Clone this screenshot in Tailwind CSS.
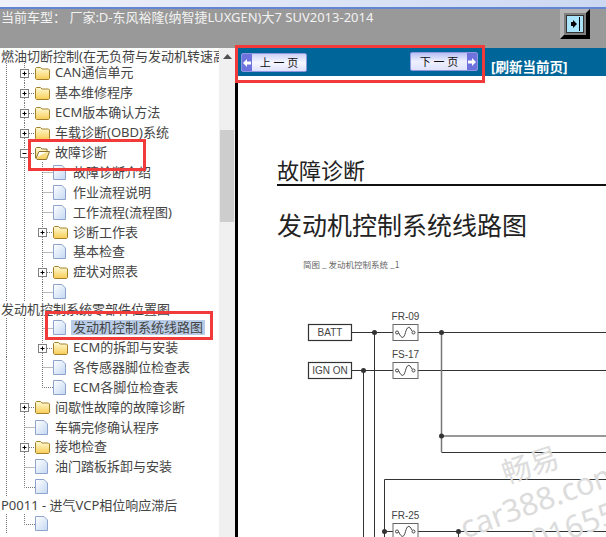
<!DOCTYPE html>
<html lang="zh">
<head>
    <meta charset="UTF-8">
    <script src="https://cdn.jsdelivr.net/npm/@tailwindcss/browser@4"></script>
    <title>故障诊断</title>
</head>
<body class="relative w-[606px] h-[537px] overflow-hidden bg-white font-['Noto_Sans','Noto_Sans_CJK_SC',sans-serif]">
    <!-- shared tree icons -->
    <svg class="absolute w-0 h-0">
        <defs>
            <linearGradient id="fy" x1="0" y1="0" x2="0" y2="1"><stop offset="0" stop-color="#fffbd8"/><stop offset="1" stop-color="#f7cd55"/></linearGradient>
            <linearGradient id="dc" x1="0" y1="0" x2="1" y2="1"><stop offset="0" stop-color="#ffffff"/><stop offset="1" stop-color="#c4d8f2"/></linearGradient>
            <symbol id="folder" viewBox="0 0 15 14"><path d="M.5 4V2.500L1.500 1.500H5.500L7 3H13.500L14.500 4V12.500L13.500 13.500H1.500L.5 12.500Z" fill="url(#fy)" stroke="#a5802c"/></symbol>
            <symbol id="open" viewBox="0 0 15 14"><path d="M.5 12V2.500L1.500 1.500H5.500L7 3H12V5.500H4L1 12.500L2 13.500H11.500L14.500 5.500H12" fill="url(#fy)" stroke="#8f7430"/></symbol>
            <symbol id="doc" viewBox="0 0 13 15"><path d="M.5.5H9L12.500 4V14.500H.5Z" fill="url(#dc)" stroke="#8ea4cc"/></symbol>
            <g id="box"><rect x="-3.500" y="-3.500" width="8" height="8" fill="#fff" stroke="#808080"/><path d="M-1.500.5H2.500" stroke="#000"/></g>
            <g id="plus"><use href="#box"/><path d="M.5-1.500V2.500" stroke="#000"/></g>
            <symbol id="p1" viewBox="0 0 35 20"><path d="M6.500 0V20M29 10.500H35M24.500 0V6M24.500 15V20" fill="none" stroke="#777" stroke-dasharray="1 1"/><use href="#plus" x="24" y="10"/></symbol>
            <symbol id="m1" viewBox="0 0 35 20"><path d="M6.500 0V20M29 10.500H35M24.500 0V6M24.500 15V20" fill="none" stroke="#777" stroke-dasharray="1 1"/><use href="#box" x="24" y="10"/></symbol>
            <symbol id="d1" viewBox="0 0 35 20"><path d="M6.500 0V20M24.500 0V20M24.500 10.500H35" fill="none" stroke="#777" stroke-dasharray="1 1"/></symbol>
            <symbol id="e1" viewBox="0 0 35 20"><path d="M6.500 0V20M24.500 0V10.500H35" fill="none" stroke="#777" stroke-dasharray="1 1"/></symbol>
            <symbol id="p2" viewBox="0 0 53 20"><path d="M6.500 0V20M24.500 0V20M47 10.500H53M42.500 0V6M42.500 15V20" fill="none" stroke="#777" stroke-dasharray="1 1"/><use href="#plus" x="42" y="10"/></symbol>
            <symbol id="d2" viewBox="0 0 53 20"><path d="M6.500 0V20M24.500 0V20M42.500 0V20M42.500 10.500H53" fill="none" stroke="#777" stroke-dasharray="1 1"/></symbol>
            <symbol id="e2" viewBox="0 0 53 20"><path d="M6.500 0V20M24.500 0V20M42.500 0V10.500H53" fill="none" stroke="#777" stroke-dasharray="1 1"/></symbol>
        </defs>
    </svg>

    <!-- window strip -->
    <div class="h-[9px] bg-gradient-to-r from-[#f0f2fa] to-[#ccd8f2] border-b-2 border-[#6485d2]"></div>

    <!-- car model bar -->
    <div class="h-[39px] bg-[#999999] flex justify-between pl-[1px] pr-[16px]">
        <p class="text-[13px] leading-[16px] text-[#f2f2f2] whitespace-pre">当前车型： 厂家:D-东风裕隆(纳智捷LUXGEN)大7 SUV2013-2014</p>
        <div class="w-[30px] h-[30px] border-[4px] border-t-[#b5b5b5] border-l-[#b5b5b5] border-r-black border-b-black bg-[#808080] p-[2px]">
            <div class="w-full h-full bg-[#a9e4fb] border border-[#333] flex items-center justify-end pr-[2px]">
                <svg width="11" height="14" viewBox="0 0 11 14"><path d="M1 5H3V3L7 7L3 11V9H1Z" fill="#000"/><path d="M9.500 0V14" stroke="#000"/></svg>
            </div>
        </div>
    </div>

    <div class="flex h-[489px]">
        <!-- tree -->
        <div class="w-[219px] h-full overflow-hidden text-[13px] text-[#444] leading-none whitespace-nowrap">
            <div class="h-[15px] pl-[1px] flex items-center pt-[2px]">燃油切断控制(在无负荷与发动机转速高</div>
            <div class="flex items-center h-[19.9px]"><svg class="w-[35px] h-[20px] shrink-0"><use href="#p1"/></svg><svg class="w-[15px] h-[14px] shrink-0"><use href="#folder"/></svg><span class="ml-[5px]">CAN通信单元</span></div>
            <div class="flex items-center h-[19.9px]"><svg class="w-[35px] h-[20px] shrink-0"><use href="#p1"/></svg><svg class="w-[15px] h-[14px] shrink-0"><use href="#folder"/></svg><span class="ml-[5px]">基本维修程序</span></div>
            <div class="flex items-center h-[19.9px]"><svg class="w-[35px] h-[20px] shrink-0"><use href="#p1"/></svg><svg class="w-[15px] h-[14px] shrink-0"><use href="#folder"/></svg><span class="ml-[5px]">ECM版本确认方法</span></div>
            <div class="flex items-center h-[19.9px]"><svg class="w-[35px] h-[20px] shrink-0"><use href="#p1"/></svg><svg class="w-[15px] h-[14px] shrink-0"><use href="#folder"/></svg><span class="ml-[5px]">车载诊断(OBD)系统</span></div>
            <div class="flex items-center h-[19.9px]"><svg class="w-[35px] h-[20px] shrink-0"><use href="#m1"/></svg><svg class="w-[15px] h-[14px] shrink-0"><use href="#open"/></svg><span class="ml-[5px]">故障诊断</span></div>
            <div class="flex items-center h-[19.9px]"><svg class="w-[53px] h-[20px] shrink-0"><use href="#d2"/></svg><svg class="w-[13px] h-[15px] shrink-0"><use href="#doc"/></svg><span class="ml-[7px]">故障诊断介绍</span></div>
            <div class="flex items-center h-[19.9px]"><svg class="w-[53px] h-[20px] shrink-0"><use href="#d2"/></svg><svg class="w-[13px] h-[15px] shrink-0"><use href="#doc"/></svg><span class="ml-[7px]">作业流程说明</span></div>
            <div class="flex items-center h-[19.9px]"><svg class="w-[53px] h-[20px] shrink-0"><use href="#d2"/></svg><svg class="w-[13px] h-[15px] shrink-0"><use href="#doc"/></svg><span class="ml-[7px]">工作流程(流程图)</span></div>
            <div class="flex items-center h-[19.9px]"><svg class="w-[53px] h-[20px] shrink-0"><use href="#p2"/></svg><svg class="w-[15px] h-[14px] shrink-0"><use href="#folder"/></svg><span class="ml-[5px]">诊断工作表</span></div>
            <div class="flex items-center h-[19.9px]"><svg class="w-[53px] h-[20px] shrink-0"><use href="#d2"/></svg><svg class="w-[13px] h-[15px] shrink-0"><use href="#doc"/></svg><span class="ml-[7px]">基本检查</span></div>
            <div class="flex items-center h-[19.9px]"><svg class="w-[53px] h-[20px] shrink-0"><use href="#p2"/></svg><svg class="w-[15px] h-[14px] shrink-0"><use href="#folder"/></svg><span class="ml-[5px]">症状对照表</span></div>
            <div class="flex items-center h-[19.9px]"><svg class="w-[53px] h-[20px] shrink-0"><use href="#d2"/></svg><svg class="w-[13px] h-[15px] shrink-0"><use href="#doc"/></svg></div>
            <div class="h-[16px] pl-[1px] flex items-center">发动机控制系统零部件位置图</div>
            <div class="flex items-center h-[19.9px]"><svg class="w-[53px] h-[20px] shrink-0"><use href="#d2"/></svg><svg class="w-[13px] h-[15px] shrink-0"><use href="#doc"/></svg><span class="ml-[5px] px-[2px] py-[1px] bg-[#b9cde8]">发动机控制系统线路图</span></div>
            <div class="flex items-center h-[19.9px]"><svg class="w-[53px] h-[20px] shrink-0"><use href="#p2"/></svg><svg class="w-[15px] h-[14px] shrink-0"><use href="#folder"/></svg><span class="ml-[5px]">ECM的拆卸与安装</span></div>
            <div class="flex items-center h-[19.9px]"><svg class="w-[53px] h-[20px] shrink-0"><use href="#d2"/></svg><svg class="w-[13px] h-[15px] shrink-0"><use href="#doc"/></svg><span class="ml-[7px]">各传感器脚位检查表</span></div>
            <div class="flex items-center h-[19.9px]"><svg class="w-[53px] h-[20px] shrink-0"><use href="#e2"/></svg><svg class="w-[13px] h-[15px] shrink-0"><use href="#doc"/></svg><span class="ml-[7px]">ECM各脚位检查表</span></div>
            <div class="flex items-center h-[19.9px]"><svg class="w-[35px] h-[20px] shrink-0"><use href="#p1"/></svg><svg class="w-[15px] h-[14px] shrink-0"><use href="#folder"/></svg><span class="ml-[5px]">间歇性故障的故障诊断</span></div>
            <div class="flex items-center h-[19.9px]"><svg class="w-[35px] h-[20px] shrink-0"><use href="#d1"/></svg><svg class="w-[13px] h-[15px] shrink-0"><use href="#doc"/></svg><span class="ml-[7px]">车辆完修确认程序</span></div>
            <div class="flex items-center h-[19.9px]"><svg class="w-[35px] h-[20px] shrink-0"><use href="#p1"/></svg><svg class="w-[15px] h-[14px] shrink-0"><use href="#folder"/></svg><span class="ml-[5px]">接地检查</span></div>
            <div class="flex items-center h-[19.9px]"><svg class="w-[35px] h-[20px] shrink-0"><use href="#d1"/></svg><svg class="w-[13px] h-[15px] shrink-0"><use href="#doc"/></svg><span class="ml-[7px]">油门踏板拆卸与安装</span></div>
            <div class="flex items-center h-[19.9px]"><svg class="w-[35px] h-[20px] shrink-0"><use href="#e1"/></svg><svg class="w-[13px] h-[15px] shrink-0"><use href="#doc"/></svg></div>
            <div class="h-[17px] pl-[1px] flex items-center">P0011 - 进气VCP相位响应滞后</div>
            <div class="flex items-center h-[19.9px]"><svg class="w-[35px] h-[20px] shrink-0"><use href="#e1"/></svg><svg class="w-[13px] h-[15px] shrink-0"><use href="#doc"/></svg></div>
            <div class="h-[17px] pl-[1px] pt-[2px] flex items-center">P0012 - 进气VCP凸轮轴相位滞后太大</div>
        </div>

        <!-- tree scrollbar -->
        <div class="w-[16px] h-full bg-[#f0f0f0] flex flex-col items-center shrink-0">
            <svg class="mt-[6px]" width="9" height="5" viewBox="0 0 9 5"><path d="M4.500 0L9 5H0Z" fill="#505050"/></svg>
            <div class="w-[14px] h-[92px] mt-[71px] bg-[#cdcdcd]"></div>
        </div>

        <!-- content pane -->
        <div class="flex-1 min-w-0 border-l-[3px] border-black overflow-hidden">
            <div class="relative h-[28px] bg-[#006699] flex items-start pl-[3px]">
                <div class="mt-[5px] w-[66px] h-[19px] flex rounded-[2px] border border-[#8f96e0] bg-gradient-to-b from-[#cdd2f7] via-[#f6f7ff] to-[#dfe2fb] text-[11px] leading-[17px] text-[#111] overflow-hidden">
                    <div class="w-[10px] bg-[#6d72dc] flex items-center justify-center"><svg width="8" height="8" viewBox="0 0 8 8"><path d="M0 4L4 0V2.500H8V5.500H4V8Z" fill="#fff"/></svg></div>
                    <span class="flex-1 text-center whitespace-pre">上 一 页</span>
                </div>
                <div class="mt-[4px] ml-[103px] w-[68px] h-[19px] flex rounded-[2px] border border-[#8f96e0] bg-gradient-to-b from-[#b9bff3] via-[#eef0ff] to-[#dfe2fb] text-[11px] leading-[17px] text-[#111] overflow-hidden">
                    <span class="flex-1 text-center whitespace-pre">下 一 页</span>
                    <div class="w-[10px] bg-[#6d72dc] flex items-center justify-center"><svg width="8" height="8" viewBox="0 0 8 8"><path d="M8 4L4 0V2.500H0V5.500H4V8Z" fill="#fff"/></svg></div>
                </div>
                <span class="ml-[13px] mt-[11px] text-[13.500px] leading-[16px] font-bold text-white whitespace-nowrap">[刷新当前页]</span>
            </div>

            <div class="pl-[39px] pt-[79px]">
                <h2 class="h-[31px] text-[22px] leading-[30px] text-[#222] border-b-[2px] border-[#111] whitespace-nowrap">故障诊断</h2>
                <h1 class="mt-[23px] text-[25px] leading-[32px] text-[#222] whitespace-nowrap">发动机控制系统线路图</h1>
                <!-- wiring diagram -->
                <svg class="-ml-[39px] mt-[16px] block" width="368" height="280" viewBox="238 257 368 280" font-family="'Liberation Sans',sans-serif" fill="#333">
                    <text x="303" y="268" font-size="8.500" font-family="'Noto Sans CJK SC',sans-serif" fill="#666">简图 _ 发动机控制系统 _1</text>
                    <g fill="none" stroke="#333">
                        <path d="M352 332.500H393M418 332.500H606M352 370.500H393M418 370.500H606M374.500 332V537M363.500 370V537M441.500 436H606M441.500 452.500H606M384.500 537V479.500H606M418 531.500H606M384 531.500H393M458.500 531V537"/>
                        <path d="M441.500 332V452" stroke="#777" stroke-width="1.500"/>
                        <rect x="308.500" y="324.500" width="43" height="16" stroke-width="1.200"/>
                        <rect x="308.500" y="362.500" width="43" height="16" stroke-width="1.200"/>
                        <rect x="393" y="324.500" width="25" height="16" fill="#fff" stroke="#666"/>
                        <rect x="393" y="362.500" width="25" height="16" fill="#fff" stroke="#666"/>
                        <rect x="393" y="523.500" width="25" height="16" fill="#fff" stroke="#666"/>
                        <path d="M398.500 332.500C402 340 404 338 405.500 332.500C407 327 409 325 412 331M398.500 370.500C402 378 404 376 405.500 370.500C407 365 409 363 412 369M398.500 531.500C402 539 404 537 405.500 531.500C407 526 409 524 412 530" stroke="#444"/>
                        <circle cx="397" cy="332.500" r="1.500" stroke="#444"/><circle cx="413.500" cy="332.500" r="1.500" stroke="#444"/>
                        <circle cx="397" cy="370.500" r="1.500" stroke="#444"/><circle cx="413.500" cy="370.500" r="1.500" stroke="#444"/>
                        <circle cx="397" cy="531.500" r="1.500" stroke="#444"/><circle cx="413.500" cy="531.500" r="1.500" stroke="#444"/>
                    </g>
                    <g>
                        <circle cx="374.500" cy="332.500" r="2.500"/><circle cx="441.500" cy="332.500" r="2.500"/><circle cx="363.500" cy="370.500" r="2.500"/><circle cx="441.500" cy="436" r="2.500"/><circle cx="384.500" cy="531.500" r="2.500"/><circle cx="458.500" cy="531.500" r="2.500"/>
                    </g>
                    <g font-size="10" fill="#444" text-anchor="middle">
                        <text x="330" y="336">BATT</text><text x="330" y="374">IGN ON</text>
                        <text x="405.500" y="320">FR-09</text><text x="405.500" y="358">FS-17</text><text x="405.500" y="519">FR-25</text>
                    </g>
                    <g fill="#dcdcdc">
                        <text transform="translate(506 484) rotate(-18)" font-size="29" font-family="'Noto Sans CJK SC',sans-serif">畅易</text>
                        <text transform="translate(465 539) rotate(-20)" font-size="31" font-family="'Noto Sans',sans-serif">car388.com</text>
                        <text transform="translate(536 552) rotate(-20)" font-size="31" font-family="'Noto Sans',sans-serif">01655</text>
                    </g>
                </svg>
            </div>
        </div>
    </div>

    <!-- red annotation boxes -->
    <div class="absolute left-[28px] top-[139px] w-[118px] h-[32px] border-[3px] border-[#f13a3a]"></div>
    <div class="absolute left-[45px] top-[311px] w-[168px] h-[29px] border-[3px] border-[#f13a3a]"></div>
    <div class="absolute left-[235px] top-[45px] w-[250px] h-[38px] border-[3px] border-[#f13a3a]"></div>
</body>
</html>
